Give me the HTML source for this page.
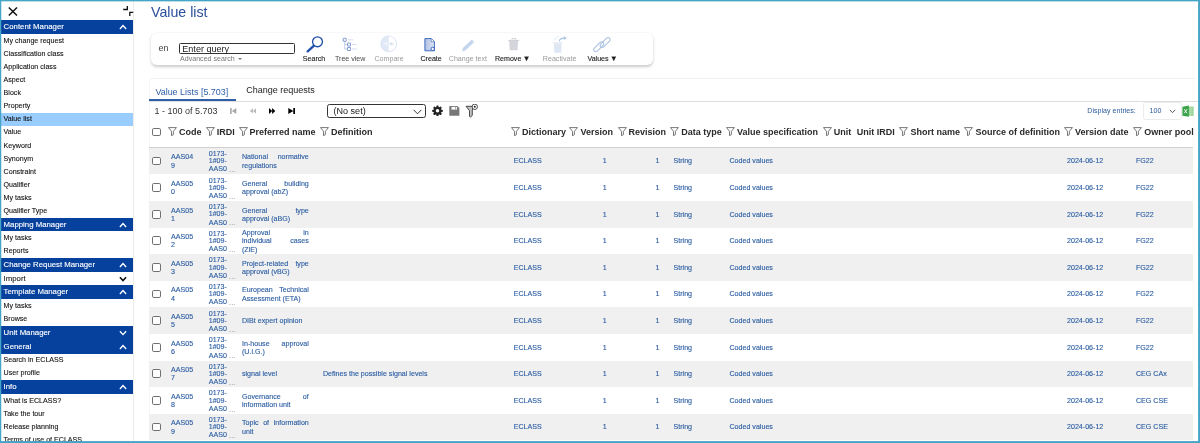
<!DOCTYPE html>
<html lang="en"><head><meta charset="utf-8"><title>Value list</title>
<style>
html,body{margin:0;padding:0;}
body{width:1200px;height:443px;overflow:hidden;background:#fff;font-family:"Liberation Sans",sans-serif;position:relative;color:#222;}
.abs{position:absolute;}
#frame{position:absolute;left:0;top:0;width:1200px;height:443px;box-sizing:border-box;border-style:solid;border-color:#4ba5c7;border-width:1.4px 2.2px 2.2px 1.2px;z-index:50;pointer-events:none;}
#side{position:absolute;left:0;top:0;width:133px;height:443px;background:#fff;border-right:1px solid #ececec;overflow:hidden;}
.bar{position:absolute;left:1px;width:132px;height:13.9px;background:#06419e;color:#fff;font-size:7.8px;line-height:13.9px;-webkit-text-stroke:0.12px #fff;}
.bar span{position:absolute;left:2.6px;top:0px;white-space:nowrap;}
.bar svg{position:absolute;left:118px;top:4.1px;}
.it{position:absolute;left:1px;width:132px;height:13.07px;line-height:13.07px;font-size:7.1px;color:#111;-webkit-text-stroke:0.1px #111;white-space:nowrap;}
.it span{position:absolute;left:2.6px;top:0.9px;}
.it.sel{background:#99ccff;}
.sub{position:absolute;left:1px;width:132px;height:14px;line-height:14px;font-size:7.8px;color:#222;-webkit-text-stroke:0.12px #222;}
.sub span{position:absolute;left:2.6px;top:0.5px;}
.sub svg{position:absolute;left:118px;top:4.4px;}
#title{position:absolute;left:151px;top:4.3px;font-size:14.2px;line-height:16px;color:#2a4e9c;white-space:nowrap;}
#panel{position:absolute;left:150.5px;top:32.5px;width:502px;height:32px;background:#fff;border-radius:6px;box-shadow:0 1.5px 3px rgba(0,0,0,.2);}
.lbl{position:absolute;font-size:7.1px;line-height:9px;white-space:nowrap;transform:translateX(-50%);text-align:center;}
.dk{color:#1e1e1e;-webkit-text-stroke:0.12px #1e1e1e;} .md{color:#4a4a4a;} .lt{color:#9a9a9a;}
#tabs{position:absolute;left:148.5px;top:77.5px;width:1046px;height:370px;border-top:1px solid #f3f3f3;border-left:1px solid #f6f6f6;border-radius:4px 0 0 0;}
.th{position:absolute;top:126.95px;font-size:9px;line-height:11px;font-weight:bold;color:#2a2a2a;white-space:nowrap;}
.fl{position:absolute;top:126.9px;}
.row{position:absolute;left:149px;width:1044.3px;height:26.6px;}
.row.g{background:#f0f0f0;}
.c{position:absolute;font-size:7.1px;color:#2a5ca2;-webkit-text-stroke:0.12px #2a5ca2;white-space:nowrap;line-height:8.35px;}
.cb{position:absolute;left:3.3px;width:6.7px;height:6.7px;border:1px solid #707070;border-radius:1.8px;background:#fff;box-sizing:content-box;}
.j{text-align:justify;text-align-last:justify;}
</style></head><body><div id="root" style="position:absolute;left:0;top:0;width:1200px;height:443px;will-change:transform;transform:translateZ(0)">

<div id="side">
<svg class="abs" style="left:7px;top:6px" width="12" height="12" viewBox="7 6 12 12"><path d="M8.8 7.4 L17 15.6 M17 7.4 L8.8 15.6" stroke="#111" stroke-width="1.45" fill="none"/></svg>
<div class="bar" style="top:20.4px"><span>Content Manager</span><svg width="8" height="6" viewBox="0 0 8 6"><path d="M0.9 5 L4 1.6 L7.1 5" stroke="#fff" stroke-width="1.35" fill="none"/></svg></div>
<div class="it" style="top:34.10px"><span>My change request</span></div>
<div class="it" style="top:47.17px"><span>Classification class</span></div>
<div class="it" style="top:60.24px"><span>Application class</span></div>
<div class="it" style="top:73.31px"><span>Aspect</span></div>
<div class="it" style="top:86.38px"><span>Block</span></div>
<div class="it" style="top:99.45px"><span>Property</span></div>
<div class="it sel" style="top:112.52px"><span>Value list</span></div>
<div class="it" style="top:125.59px"><span>Value</span></div>
<div class="it" style="top:138.66px"><span>Keyword</span></div>
<div class="it" style="top:151.73px"><span>Synonym</span></div>
<div class="it" style="top:164.80px"><span>Constraint</span></div>
<div class="it" style="top:177.87px"><span>Qualifier</span></div>
<div class="it" style="top:190.94px"><span>My tasks</span></div>
<div class="it" style="top:204.01px"><span>Qualifier Type</span></div>
<div class="bar" style="top:217.6px"><span>Mapping Manager</span><svg width="8" height="6" viewBox="0 0 8 6"><path d="M0.9 5 L4 1.6 L7.1 5" stroke="#fff" stroke-width="1.35" fill="none"/></svg></div>
<div class="it" style="top:231.30px"><span>My tasks</span></div>
<div class="it" style="top:244.37px"><span>Reports</span></div>
<div class="bar" style="top:257.7px"><span>Change Request Manager</span><svg width="8" height="6" viewBox="0 0 8 6"><path d="M0.9 5 L4 1.6 L7.1 5" stroke="#fff" stroke-width="1.35" fill="none"/></svg></div>
<div class="sub" style="top:271.3px"><span>Import</span><svg width="8" height="6" viewBox="0 0 8 6"><path d="M0.9 1.2 L4 4.6 L7.1 1.2" stroke="#111" stroke-width="1.6" fill="none"/></svg></div>
<div class="bar" style="top:285.1px"><span>Template Manager</span><svg width="8" height="6" viewBox="0 0 8 6"><path d="M0.9 5 L4 1.6 L7.1 5" stroke="#fff" stroke-width="1.35" fill="none"/></svg></div>
<div class="it" style="top:299.00px"><span>My tasks</span></div>
<div class="it" style="top:312.07px"><span>Browse</span></div>
<div class="bar" style="top:325.7px"><span>Unit Manager</span><svg width="8" height="6" viewBox="0 0 8 6"><path d="M0.9 1.2 L4 4.6 L7.1 1.2" stroke="#fff" stroke-width="1.35" fill="none"/></svg></div>
<div class="bar" style="top:339.9px"><span>General</span><svg width="8" height="6" viewBox="0 0 8 6"><path d="M0.9 5 L4 1.6 L7.1 5" stroke="#fff" stroke-width="1.35" fill="none"/></svg></div>
<div class="it" style="top:353.40px"><span>Search in ECLASS</span></div>
<div class="it" style="top:366.47px"><span>User profile</span></div>
<div class="bar" style="top:380.4px"><span>Info</span><svg width="8" height="6" viewBox="0 0 8 6"><path d="M0.9 5 L4 1.6 L7.1 5" stroke="#fff" stroke-width="1.35" fill="none"/></svg></div>
<div class="it" style="top:394.00px"><span>What is ECLASS?</span></div>
<div class="it" style="top:407.07px"><span>Take the tour</span></div>
<div class="it" style="top:420.14px"><span>Release planning</span></div>
<div class="it" style="top:433.21px"><span>Terms of use of ECLASS</span></div>
</div>
<svg class="abs" style="left:122px;top:5px;z-index:5" width="13" height="12" viewBox="122 5 13 12"><path d="M123.2 9.5 H127.35 V6 M133.2 12.4 H129.8 V15.9" stroke="#111" stroke-width="1.3" fill="none"/></svg>
<div id="title">Value list</div>
<div id="panel"></div>
<div class="abs" style="left:158.6px;top:42.8px;font-size:9px;line-height:11px;color:#444">en</div>
<div class="abs" style="left:179.3px;top:42.7px;width:113.5px;height:9.4px;border:1.2px solid #333;border-radius:1.5px;background:#fff"></div>
<div class="abs" style="left:182.3px;top:43.7px;font-size:9.05px;line-height:11px;color:#222;white-space:nowrap">Enter query</div>
<div class="abs" style="left:180px;top:55.4px;font-size:7.1px;line-height:9px;color:#777;white-space:nowrap">Advanced search <span style="display:inline-block;width:0;height:0;border-left:2.3px solid transparent;border-right:2.3px solid transparent;border-top:2.7px solid #777;margin-left:1.4px;position:relative;top:-1.7px"></span></div>

<svg class="abs" style="left:305px;top:35px" width="20" height="18" viewBox="305 35 20 18">
 <circle cx="317.5" cy="41.8" r="4.95" fill="none" stroke="#1f4fa8" stroke-width="1.3"/>
 <path d="M313.7 45.9 L307.7 51.4" stroke="#1f4fa8" stroke-width="2.3" stroke-linecap="round" fill="none"/>
</svg>
<svg class="abs" style="left:341px;top:36px" width="18" height="16" viewBox="341 36 18 16">
 <path d="M344.7 41.5 V49 H347.2 M344.7 44.5 H347.2" stroke="#9db0da" stroke-width="0.6" fill="none"/>
 <rect x="343.2" y="38.3" width="3" height="3" rx="0.3" fill="#fff" stroke="#4167b8" stroke-width="0.65"/>
 <rect x="347.5" y="43" width="3" height="3" rx="0.3" fill="#fff" stroke="#4167b8" stroke-width="0.65"/>
 <rect x="347.5" y="47.5" width="3" height="3" rx="0.3" fill="#fff" stroke="#4167b8" stroke-width="0.65"/>
 <path d="M348 39.8 H353.3 M352 44.5 H356.8 M352 49 H356.8" stroke="#c9d4ec" stroke-width="0.8" fill="none"/>
</svg>
<svg class="abs" style="left:379px;top:34px" width="20" height="20" viewBox="379 34 20 20">
 <path d="M388.7 35.9 A7.9 7.9 0 0 0 388.7 51.7 Z" fill="#e1e9f6"/>
 <circle cx="388.7" cy="43.8" r="7.9" fill="none" stroke="#cfdbf0" stroke-width="0.7"/>
 <path d="M393.5 43.8 H390 M391.4 42.3 L389.9 43.8 L391.4 45.3" stroke="#b4c7ea" stroke-width="0.7" fill="none"/>
 <path d="M383.8 43.8 H387 M385.8 42.3 L387.3 43.8 L385.8 45.3" stroke="#fff" stroke-width="0.7" fill="none"/>
</svg>
<svg class="abs" style="left:422px;top:36px" width="16" height="17" viewBox="422 36 16 17">
 <defs><linearGradient id="gcr" x1="0" y1="0" x2="1" y2="0"><stop offset="0" stop-color="#b0c1e4"/><stop offset="1" stop-color="#dfe6f4"/></linearGradient></defs>
 <path d="M424.9 38.6 H431.4 L434.4 41.6 V50.8 H424.9 Z" fill="url(#gcr)" stroke="#2f5fba" stroke-width="0.9" stroke-linejoin="round"/>
 <path d="M431.2 38.8 V41.8 H434.2" fill="#fff" stroke="#2f5fba" stroke-width="0.6"/>
 <circle cx="432.7" cy="48.9" r="1.7" fill="#fff" stroke="#2f5fba" stroke-width="0.9"/>
</svg>
<svg class="abs" style="left:459px;top:37px" width="18" height="16" viewBox="459 37 18 16">
 <path d="M462.1 51.2 L462.9 47.9 L471.9 39.5 L474.3 42 L465.3 50.4 Z" fill="#c3d5ee"/>
 <path d="M472.2 41.2 L473 42" stroke="#fff" stroke-width="0.7"/>
</svg>
<svg class="abs" style="left:506px;top:37px" width="16" height="15" viewBox="506 37 16 15">
 <path d="M512 40 V38.5 H515.7 V40" fill="none" stroke="#d0d2d8" stroke-width="0.9"/>
 <rect x="508.2" y="39.9" width="10.9" height="1.2" fill="#d0d2d8"/>
 <path d="M509.2 41.1 H518.1 L517.5 50.3 H509.8 Z" fill="#d3d5da"/>
</svg>
<svg class="abs" style="left:550px;top:34px" width="19" height="20" viewBox="550 34 19 20">
 <path d="M553.9 43.3 H561.6 L561.2 52.7 H554.3 Z" fill="#dfe7f5"/>
 <rect x="552.6" y="42.3" width="10.2" height="1.1" fill="#e3eaf6"/>
 <path d="M553.5 40.5 L558.5 36" stroke="#edf1f9" stroke-width="1.1" fill="none"/>
 <path d="M559.3 41.2 Q559.6 38.1 564.4 38.1" stroke="#a9c0e8" stroke-width="1.1" fill="none"/>
 <path d="M564 36.2 L566.6 38.1 L564 40 Z" fill="#a9c0e8"/>
</svg>
<svg class="abs" style="left:592px;top:36px" width="20" height="17" viewBox="592 36 20 17">
 <g fill="none" stroke="#a9c0e4" stroke-width="1.05">
  <rect x="-6.2" y="-2.1" width="12.4" height="4.2" rx="2.1" transform="translate(598.7 46.8) rotate(-45)"/>
  <rect x="-6.2" y="-2.1" width="12.4" height="4.2" rx="2.1" transform="translate(605.1 42.6) rotate(-45)"/>
 </g>
</svg>

<div class="lbl dk" style="left:314px;top:54.6px">Search</div>
<div class="lbl md" style="left:350.2px;top:54.6px">Tree view</div>
<div class="lbl lt" style="left:389.1px;top:54.6px">Compare</div>
<div class="lbl dk" style="left:431.1px;top:54.6px">Create</div>
<div class="lbl lt" style="left:467.9px;top:54.6px">Change text</div>
<div class="lbl dk" style="left:512.6px;top:54.6px">Remove<span style="font-size:7.6px;line-height:0;position:relative;top:0.3px;margin-left:1.4px">&#9660;</span></div>
<div class="lbl lt" style="left:559.6px;top:54.6px">Reactivate</div>
<div class="lbl dk" style="left:602.5px;top:54.6px">Values<span style="font-size:7.6px;line-height:0;position:relative;top:0.3px;margin-left:1.4px">&#9660;</span></div>
<div id="tabs"></div>
<div class="abs" style="left:149px;top:100.8px;width:1049px;height:1px;background:#dedede"></div>
<div class="abs" style="left:148.8px;top:99.3px;width:86.8px;height:2px;background:#2e5fa8"></div>
<div class="abs" style="left:155.4px;top:87px;font-size:8.95px;line-height:11px;color:#2e5fa8;white-space:nowrap">Value Lists [5.703]</div>
<div class="abs" style="left:246.2px;top:84.6px;font-size:9.03px;line-height:11px;color:#222;white-space:nowrap">Change requests</div>
<div class="abs" style="left:154.4px;top:105.8px;font-size:9px;line-height:11px;color:#333;white-space:nowrap">1 - 100 of 5.703</div>

<svg class="abs" style="left:229px;top:107px" width="70" height="8" viewBox="229 107 70 8">
 <path d="M230.1 107.9 H231.7 V114 H230.1 Z M236.3 107.9 V114 L231.9 110.95 Z" fill="#a8a8a8"/>
 <path d="M252.9 108.2 V113.6 L249.9 110.9 Z M256 108.2 V113.6 L253 110.9 Z" fill="#b8b8b8"/>
 <path d="M269 107.9 V114 L272.2 110.95 Z M272.1 107.9 V114 L275.3 110.95 Z" fill="#000"/>
 <path d="M288.3 107.9 V114 L293.3 110.95 Z M293.3 107.9 H295 V114 H293.3 Z" fill="#000"/>
</svg>
<svg class="abs" style="left:431px;top:104px" width="48" height="15" viewBox="431 104 48 15">
 <g transform="translate(437.5 110.8)">
  <g fill="#222">
   <rect x="-1.1" y="-5.3" width="2.2" height="10.6" rx="0.6"/>
   <rect x="-1.1" y="-5.3" width="2.2" height="10.6" rx="0.6" transform="rotate(45)"/>
   <rect x="-1.1" y="-5.3" width="2.2" height="10.6" rx="0.6" transform="rotate(90)"/>
   <rect x="-1.1" y="-5.3" width="2.2" height="10.6" rx="0.6" transform="rotate(135)"/>
   <circle r="3.9"/>
  </g>
  <circle r="1.8" fill="#fff"/>
 </g>
 <path d="M449.3 106 H457.3 L459.4 108.1 V115.8 H449.3 Z" fill="#777"/>
 <rect x="451.5" y="106.9" width="5.6" height="2.7" fill="#fff"/>
 <rect x="455.2" y="107.1" width="1" height="2.3" fill="#999"/>
 <path d="M466.1 106.3 H473.2 L472.3 110.7 V115.4 L470.4 117.2 L469.5 116.2 V110.7 Z" fill="#c4c4c4" stroke="#222" stroke-width="0.8" stroke-linejoin="round"/>
 <circle cx="474.8" cy="106.8" r="2.7" fill="#fff" stroke="#222" stroke-width="0.8"/>
 <circle cx="474.8" cy="106.8" r="1" fill="#222"/>
</svg>

<div class="abs" style="left:327.3px;top:103.8px;width:96.6px;height:12px;border:1.2px solid #333;border-radius:2.5px;background:#fff"></div>
<div class="abs" style="left:333.5px;top:106.3px;font-size:9.05px;line-height:11px;color:#222;white-space:nowrap">(No set)</div>
<svg class="abs" style="left:412.8px;top:108.6px" width="9" height="6" viewBox="0 0 9 6"><path d="M0.6 0.8 L4.5 4.8 L8.4 0.8" stroke="#222" stroke-width="0.9" fill="none"/></svg>
<div class="abs" style="left:1087.3px;top:107px;font-size:7.1px;line-height:9px;color:#2d5c9c;white-space:nowrap">Display entries:</div>
<div class="abs" style="left:1142.5px;top:102.2px;width:37px;height:15.8px;border:1px solid #ebebeb;border-radius:2.5px;background:#fff"></div>
<div class="abs" style="left:1149.5px;top:107px;font-size:7.1px;line-height:9px;color:#2d5c9c;white-space:nowrap">100</div>
<svg class="abs" style="left:1169px;top:108.8px" width="7" height="5" viewBox="0 0 7 5"><path d="M0.8 0.9 L3.5 3.6 L6.2 0.9" stroke="#444" stroke-width="0.9" fill="none"/></svg>

<svg class="abs" style="left:1182px;top:105px" width="13" height="13" viewBox="1182 105 13 13">
 <rect x="1188" y="106.6" width="5.7" height="9.2" fill="#93d193"/>
 <path d="M1190.8 106.6 V115.8 M1188 109 H1193.7 M1188 111.3 H1193.7 M1188 113.6 H1193.7" stroke="#c9eac9" stroke-width="0.5"/>
 <path d="M1182.4 106.7 L1188.9 105.6 V116.8 L1182.4 115.7 Z" fill="#3aa349"/>
 <path d="M1184.3 109.2 L1187 113.2 M1187 109.2 L1184.3 113.2" stroke="#fff" stroke-width="0.9"/>
</svg>

<div class="cb" style="left:152.2px;top:127.5px;width:6.8px;height:6.8px"></div>
<svg class="fl" style="left:168.2px" width="9" height="9" viewBox="0 0 9 9"><path d="M0.5 0.6 H8.4 L5.4 4.4 V7.7 L3.5 8.7 V4.4 Z" stroke="#555" stroke-width="0.8" fill="none" stroke-linejoin="round"/></svg>
<div class="th" style="left:179px">Code</div>
<svg class="fl" style="left:206px" width="9" height="9" viewBox="0 0 9 9"><path d="M0.5 0.6 H8.4 L5.4 4.4 V7.7 L3.5 8.7 V4.4 Z" stroke="#555" stroke-width="0.8" fill="none" stroke-linejoin="round"/></svg>
<div class="th" style="left:216.8px">IRDI</div>
<svg class="fl" style="left:239px" width="9" height="9" viewBox="0 0 9 9"><path d="M0.5 0.6 H8.4 L5.4 4.4 V7.7 L3.5 8.7 V4.4 Z" stroke="#555" stroke-width="0.8" fill="none" stroke-linejoin="round"/></svg>
<div class="th" style="left:249.5px">Preferred name</div>
<svg class="fl" style="left:320px" width="9" height="9" viewBox="0 0 9 9"><path d="M0.5 0.6 H8.4 L5.4 4.4 V7.7 L3.5 8.7 V4.4 Z" stroke="#555" stroke-width="0.8" fill="none" stroke-linejoin="round"/></svg>
<div class="th" style="left:331px">Definition</div>
<svg class="fl" style="left:510.5px" width="9" height="9" viewBox="0 0 9 9"><path d="M0.5 0.6 H8.4 L5.4 4.4 V7.7 L3.5 8.7 V4.4 Z" stroke="#555" stroke-width="0.8" fill="none" stroke-linejoin="round"/></svg>
<div class="th" style="left:522px">Dictionary</div>
<svg class="fl" style="left:569.2px" width="9" height="9" viewBox="0 0 9 9"><path d="M0.5 0.6 H8.4 L5.4 4.4 V7.7 L3.5 8.7 V4.4 Z" stroke="#555" stroke-width="0.8" fill="none" stroke-linejoin="round"/></svg>
<div class="th" style="left:580.5px">Version</div>
<svg class="fl" style="left:617.5px" width="9" height="9" viewBox="0 0 9 9"><path d="M0.5 0.6 H8.4 L5.4 4.4 V7.7 L3.5 8.7 V4.4 Z" stroke="#555" stroke-width="0.8" fill="none" stroke-linejoin="round"/></svg>
<div class="th" style="left:628.5px">Revision</div>
<svg class="fl" style="left:670px" width="9" height="9" viewBox="0 0 9 9"><path d="M0.5 0.6 H8.4 L5.4 4.4 V7.7 L3.5 8.7 V4.4 Z" stroke="#555" stroke-width="0.8" fill="none" stroke-linejoin="round"/></svg>
<div class="th" style="left:681.2px">Data type</div>
<svg class="fl" style="left:725.7px" width="9" height="9" viewBox="0 0 9 9"><path d="M0.5 0.6 H8.4 L5.4 4.4 V7.7 L3.5 8.7 V4.4 Z" stroke="#555" stroke-width="0.8" fill="none" stroke-linejoin="round"/></svg>
<div class="th" style="left:737px">Value specification</div>
<svg class="fl" style="left:822.5px" width="9" height="9" viewBox="0 0 9 9"><path d="M0.5 0.6 H8.4 L5.4 4.4 V7.7 L3.5 8.7 V4.4 Z" stroke="#555" stroke-width="0.8" fill="none" stroke-linejoin="round"/></svg>
<div class="th" style="left:833.7px">Unit</div>
<div class="th" style="left:856.7px">Unit IRDI</div>
<svg class="fl" style="left:898.7px" width="9" height="9" viewBox="0 0 9 9"><path d="M0.5 0.6 H8.4 L5.4 4.4 V7.7 L3.5 8.7 V4.4 Z" stroke="#555" stroke-width="0.8" fill="none" stroke-linejoin="round"/></svg>
<div class="th" style="left:910.5px">Short name</div>
<svg class="fl" style="left:963.7px" width="9" height="9" viewBox="0 0 9 9"><path d="M0.5 0.6 H8.4 L5.4 4.4 V7.7 L3.5 8.7 V4.4 Z" stroke="#555" stroke-width="0.8" fill="none" stroke-linejoin="round"/></svg>
<div class="th" style="left:975.4px">Source of definition</div>
<svg class="fl" style="left:1063.7px" width="9" height="9" viewBox="0 0 9 9"><path d="M0.5 0.6 H8.4 L5.4 4.4 V7.7 L3.5 8.7 V4.4 Z" stroke="#555" stroke-width="0.8" fill="none" stroke-linejoin="round"/></svg>
<div class="th" style="left:1075px">Version date</div>
<svg class="fl" style="left:1133px" width="9" height="9" viewBox="0 0 9 9"><path d="M0.5 0.6 H8.4 L5.4 4.4 V7.7 L3.5 8.7 V4.4 Z" stroke="#555" stroke-width="0.8" fill="none" stroke-linejoin="round"/></svg>
<div class="th" style="left:1144.2px">Owner pool</div>
<div class="abs" style="left:149px;top:146.6px;width:1044.3px;height:1.2px;background:#cfcfcf"></div>
<div class="row g" style="top:147.80px">
<div class="cb" style="top:8.90px"></div>
<div class="c" style="left:22px;top:5.55px">AAS04<br>9</div>
<div class="c" style="left:59.7px;top:3.20px;line-height:7.15px">0173-<br>1#09-<br>AAS0 <span style="color:#7a7a7a;-webkit-text-stroke:0;font-size:7px;letter-spacing:0.2px;margin-left:0.2px;position:relative;top:0.9px">...</span></div>
<div class="c" style="left:93px;width:66.8px;top:5.55px"><div class="j">National normative</div><div>regulations</div></div>
<div class="c" style="left:364.7px;top:9.62px">ECLASS</div>
<div class="c" style="left:440px;width:17.8px;text-align:right;top:9.62px">1</div>
<div class="c" style="left:492px;width:18.4px;text-align:right;top:9.62px">1</div>
<div class="c" style="left:524.5px;top:9.62px">String</div>
<div class="c" style="left:580.5px;top:9.62px">Coded values</div>
<div class="c" style="left:918px;top:9.62px">2024-06-12</div>
<div class="c" style="left:987px;top:9.62px">FG22</div>
</div>
<div class="row" style="top:174.40px">
<div class="cb" style="top:8.90px"></div>
<div class="c" style="left:22px;top:5.55px">AAS05<br>0</div>
<div class="c" style="left:59.7px;top:3.20px;line-height:7.15px">0173-<br>1#09-<br>AAS0 <span style="color:#7a7a7a;-webkit-text-stroke:0;font-size:7px;letter-spacing:0.2px;margin-left:0.2px;position:relative;top:0.9px">...</span></div>
<div class="c" style="left:93px;width:66.8px;top:5.55px"><div class="j">General building</div><div>approval (abZ)</div></div>
<div class="c" style="left:364.7px;top:9.62px">ECLASS</div>
<div class="c" style="left:440px;width:17.8px;text-align:right;top:9.62px">1</div>
<div class="c" style="left:492px;width:18.4px;text-align:right;top:9.62px">1</div>
<div class="c" style="left:524.5px;top:9.62px">String</div>
<div class="c" style="left:580.5px;top:9.62px">Coded values</div>
<div class="c" style="left:918px;top:9.62px">2024-06-12</div>
<div class="c" style="left:987px;top:9.62px">FG22</div>
</div>
<div class="row g" style="top:201.00px">
<div class="cb" style="top:8.90px"></div>
<div class="c" style="left:22px;top:5.55px">AAS05<br>1</div>
<div class="c" style="left:59.7px;top:3.20px;line-height:7.15px">0173-<br>1#09-<br>AAS0 <span style="color:#7a7a7a;-webkit-text-stroke:0;font-size:7px;letter-spacing:0.2px;margin-left:0.2px;position:relative;top:0.9px">...</span></div>
<div class="c" style="left:93px;width:66.8px;top:5.55px"><div class="j">General type</div><div>approval (aBG)</div></div>
<div class="c" style="left:364.7px;top:9.62px">ECLASS</div>
<div class="c" style="left:440px;width:17.8px;text-align:right;top:9.62px">1</div>
<div class="c" style="left:492px;width:18.4px;text-align:right;top:9.62px">1</div>
<div class="c" style="left:524.5px;top:9.62px">String</div>
<div class="c" style="left:580.5px;top:9.62px">Coded values</div>
<div class="c" style="left:918px;top:9.62px">2024-06-12</div>
<div class="c" style="left:987px;top:9.62px">FG22</div>
</div>
<div class="row" style="top:227.60px">
<div class="cb" style="top:8.90px"></div>
<div class="c" style="left:22px;top:5.55px">AAS05<br>2</div>
<div class="c" style="left:59.7px;top:3.20px;line-height:7.15px">0173-<br>1#09-<br>AAS0 <span style="color:#7a7a7a;-webkit-text-stroke:0;font-size:7px;letter-spacing:0.2px;margin-left:0.2px;position:relative;top:0.9px">...</span></div>
<div class="c" style="left:93px;width:66.8px;top:1.38px"><div class="j">Approval in</div><div class="j">individual cases</div><div>(ZiE)</div></div>
<div class="c" style="left:364.7px;top:9.62px">ECLASS</div>
<div class="c" style="left:440px;width:17.8px;text-align:right;top:9.62px">1</div>
<div class="c" style="left:492px;width:18.4px;text-align:right;top:9.62px">1</div>
<div class="c" style="left:524.5px;top:9.62px">String</div>
<div class="c" style="left:580.5px;top:9.62px">Coded values</div>
<div class="c" style="left:918px;top:9.62px">2024-06-12</div>
<div class="c" style="left:987px;top:9.62px">FG22</div>
</div>
<div class="row g" style="top:254.20px">
<div class="cb" style="top:8.90px"></div>
<div class="c" style="left:22px;top:5.55px">AAS05<br>3</div>
<div class="c" style="left:59.7px;top:3.20px;line-height:7.15px">0173-<br>1#09-<br>AAS0 <span style="color:#7a7a7a;-webkit-text-stroke:0;font-size:7px;letter-spacing:0.2px;margin-left:0.2px;position:relative;top:0.9px">...</span></div>
<div class="c" style="left:93px;width:66.8px;top:5.55px"><div class="j">Project-related type</div><div>approval (vBG)</div></div>
<div class="c" style="left:364.7px;top:9.62px">ECLASS</div>
<div class="c" style="left:440px;width:17.8px;text-align:right;top:9.62px">1</div>
<div class="c" style="left:492px;width:18.4px;text-align:right;top:9.62px">1</div>
<div class="c" style="left:524.5px;top:9.62px">String</div>
<div class="c" style="left:580.5px;top:9.62px">Coded values</div>
<div class="c" style="left:918px;top:9.62px">2024-06-12</div>
<div class="c" style="left:987px;top:9.62px">FG22</div>
</div>
<div class="row" style="top:280.80px">
<div class="cb" style="top:8.90px"></div>
<div class="c" style="left:22px;top:5.55px">AAS05<br>4</div>
<div class="c" style="left:59.7px;top:3.20px;line-height:7.15px">0173-<br>1#09-<br>AAS0 <span style="color:#7a7a7a;-webkit-text-stroke:0;font-size:7px;letter-spacing:0.2px;margin-left:0.2px;position:relative;top:0.9px">...</span></div>
<div class="c" style="left:93px;width:66.8px;top:5.55px"><div class="j">European Technical</div><div>Assessment (ETA)</div></div>
<div class="c" style="left:364.7px;top:9.62px">ECLASS</div>
<div class="c" style="left:440px;width:17.8px;text-align:right;top:9.62px">1</div>
<div class="c" style="left:492px;width:18.4px;text-align:right;top:9.62px">1</div>
<div class="c" style="left:524.5px;top:9.62px">String</div>
<div class="c" style="left:580.5px;top:9.62px">Coded values</div>
<div class="c" style="left:918px;top:9.62px">2024-06-12</div>
<div class="c" style="left:987px;top:9.62px">FG22</div>
</div>
<div class="row g" style="top:307.40px">
<div class="cb" style="top:8.90px"></div>
<div class="c" style="left:22px;top:5.55px">AAS05<br>5</div>
<div class="c" style="left:59.7px;top:3.20px;line-height:7.15px">0173-<br>1#09-<br>AAS0 <span style="color:#7a7a7a;-webkit-text-stroke:0;font-size:7px;letter-spacing:0.2px;margin-left:0.2px;position:relative;top:0.9px">...</span></div>
<div class="c" style="left:93px;width:66.8px;top:9.72px"><div>DIBt expert opinion</div></div>
<div class="c" style="left:364.7px;top:9.62px">ECLASS</div>
<div class="c" style="left:440px;width:17.8px;text-align:right;top:9.62px">1</div>
<div class="c" style="left:492px;width:18.4px;text-align:right;top:9.62px">1</div>
<div class="c" style="left:524.5px;top:9.62px">String</div>
<div class="c" style="left:580.5px;top:9.62px">Coded values</div>
<div class="c" style="left:918px;top:9.62px">2024-06-12</div>
<div class="c" style="left:987px;top:9.62px">FG22</div>
</div>
<div class="row" style="top:334.00px">
<div class="cb" style="top:8.90px"></div>
<div class="c" style="left:22px;top:5.55px">AAS05<br>6</div>
<div class="c" style="left:59.7px;top:3.20px;line-height:7.15px">0173-<br>1#09-<br>AAS0 <span style="color:#7a7a7a;-webkit-text-stroke:0;font-size:7px;letter-spacing:0.2px;margin-left:0.2px;position:relative;top:0.9px">...</span></div>
<div class="c" style="left:93px;width:66.8px;top:5.55px"><div class="j">In-house approval</div><div>(U.i.G.)</div></div>
<div class="c" style="left:364.7px;top:9.62px">ECLASS</div>
<div class="c" style="left:440px;width:17.8px;text-align:right;top:9.62px">1</div>
<div class="c" style="left:492px;width:18.4px;text-align:right;top:9.62px">1</div>
<div class="c" style="left:524.5px;top:9.62px">String</div>
<div class="c" style="left:580.5px;top:9.62px">Coded values</div>
<div class="c" style="left:918px;top:9.62px">2024-06-12</div>
<div class="c" style="left:987px;top:9.62px">FG22</div>
</div>
<div class="row g" style="top:360.60px">
<div class="cb" style="top:8.90px"></div>
<div class="c" style="left:22px;top:5.55px">AAS05<br>7</div>
<div class="c" style="left:59.7px;top:3.20px;line-height:7.15px">0173-<br>1#09-<br>AAS0 <span style="color:#7a7a7a;-webkit-text-stroke:0;font-size:7px;letter-spacing:0.2px;margin-left:0.2px;position:relative;top:0.9px">...</span></div>
<div class="c" style="left:93px;width:66.8px;top:9.72px"><div>signal level</div></div>
<div class="c" style="left:174px;top:9.62px">Defines the possible signal levels</div>
<div class="c" style="left:364.7px;top:9.62px">ECLASS</div>
<div class="c" style="left:440px;width:17.8px;text-align:right;top:9.62px">1</div>
<div class="c" style="left:492px;width:18.4px;text-align:right;top:9.62px">1</div>
<div class="c" style="left:524.5px;top:9.62px">String</div>
<div class="c" style="left:580.5px;top:9.62px">Coded values</div>
<div class="c" style="left:918px;top:9.62px">2024-06-12</div>
<div class="c" style="left:987px;top:9.62px">CEG CAx</div>
</div>
<div class="row" style="top:387.20px">
<div class="cb" style="top:8.90px"></div>
<div class="c" style="left:22px;top:5.55px">AAS05<br>8</div>
<div class="c" style="left:59.7px;top:3.20px;line-height:7.15px">0173-<br>1#09-<br>AAS0 <span style="color:#7a7a7a;-webkit-text-stroke:0;font-size:7px;letter-spacing:0.2px;margin-left:0.2px;position:relative;top:0.9px">...</span></div>
<div class="c" style="left:93px;width:66.8px;top:5.55px"><div class="j">Governance of</div><div>information unit</div></div>
<div class="c" style="left:364.7px;top:9.62px">ECLASS</div>
<div class="c" style="left:440px;width:17.8px;text-align:right;top:9.62px">1</div>
<div class="c" style="left:492px;width:18.4px;text-align:right;top:9.62px">1</div>
<div class="c" style="left:524.5px;top:9.62px">String</div>
<div class="c" style="left:580.5px;top:9.62px">Coded values</div>
<div class="c" style="left:918px;top:9.62px">2024-06-12</div>
<div class="c" style="left:987px;top:9.62px">CEG CSE</div>
</div>
<div class="row g" style="top:413.80px">
<div class="cb" style="top:8.90px"></div>
<div class="c" style="left:22px;top:5.55px">AAS05<br>9</div>
<div class="c" style="left:59.7px;top:3.20px;line-height:7.15px">0173-<br>1#09-<br>AAS0 <span style="color:#7a7a7a;-webkit-text-stroke:0;font-size:7px;letter-spacing:0.2px;margin-left:0.2px;position:relative;top:0.9px">...</span></div>
<div class="c" style="left:93px;width:66.8px;top:5.55px"><div class="j">Topic of information</div><div>unit</div></div>
<div class="c" style="left:364.7px;top:9.62px">ECLASS</div>
<div class="c" style="left:440px;width:17.8px;text-align:right;top:9.62px">1</div>
<div class="c" style="left:492px;width:18.4px;text-align:right;top:9.62px">1</div>
<div class="c" style="left:524.5px;top:9.62px">String</div>
<div class="c" style="left:580.5px;top:9.62px">Coded values</div>
<div class="c" style="left:918px;top:9.62px">2024-06-12</div>
<div class="c" style="left:987px;top:9.62px">CEG CSE</div>
</div>
<div class="row" style="top:440.40px">
</div>
<svg class="abs" style="left:0;top:0;z-index:50" width="1200" height="443" viewBox="0 0 1200 443"><g fill="#46a4c6"><rect x="0" y="0" width="1200" height="1.35"/><rect x="0" y="0" width="1.25" height="443"/><rect x="1198.1" y="0" width="1.9" height="443"/><rect x="0" y="441.1" width="1200" height="1.9"/></g></svg>
</div></body></html>
